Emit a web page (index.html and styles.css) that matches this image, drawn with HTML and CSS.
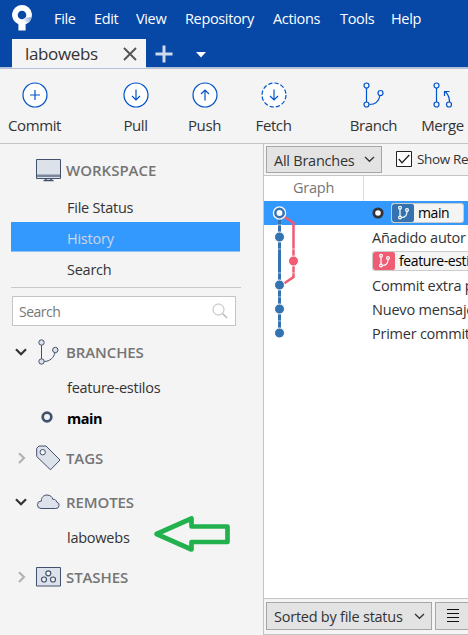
FILE: index.html
```html
<!DOCTYPE html>
<html lang="en">
<head>
<meta charset="utf-8">
<title>labowebs</title>
<link rel="stylesheet" href="styles.css">
</head>
<body>
<div class="app">
  <header class="titlebar">
    <nav class="menu">
      <svg class="logo" width="22" height="28" viewBox="0 0 22 28"><defs><linearGradient id="lg" x1="1" y1="0" x2="0" y2=".6"><stop offset="0" stop-color="#7f9fd0"/><stop offset="1" stop-color="#fff"/></linearGradient></defs><path fill="#fff" fill-rule="evenodd" d="M11 1a10 10 0 0 1 3.600 19.300V26.500H7.400V20.300A10 10 0 0 1 11 1zm0 5.700a4.300 4.300 0 1 0 0 8.600 4.300 4.300 0 0 0 0-8.600z"/><path fill="url(#lg)" d="M11.500 15.300l3.400-1.600 6-.7a10 10 0 0 1-6.300 7.300V17z"/></svg>
      <span class="m-file">File</span><span class="m-edit">Edit</span><span class="m-view">View</span><span class="m-repo">Repository</span><span class="m-act">Actions</span><span class="m-tools">Tools</span><span class="m-help">Help</span>
    </nav>
    <div class="tabs">
      <div class="tab"><span>labowebs</span><svg width="14" height="14" viewBox="0 0 14 14"><path d="M1 1l12 12M13 1L1 13" stroke="#555" stroke-width="1.900"/></svg></div>
      <svg class="plus" width="18" height="18" viewBox="0 0 18 18"><path d="M9 .5v17M.5 9h17" stroke="#d0dcee" stroke-width="3"/></svg>
      <svg class="caret" width="10" height="6" viewBox="0 0 10 6"><path d="M0 0h10L5 5.500z" fill="#fff"/></svg>
    </div>
  </header>
  <div class="toolbar">
    <div class="tool commit"><svg width="26" height="26" viewBox="0 0 26 26"><circle cx="13" cy="13" r="12" fill="#fff"/><path d="M13 8v10M8 13h10"/></svg><span>Commit</span></div>
    <div class="tool"><svg width="26" height="26" viewBox="0 0 26 26"><circle cx="13" cy="13" r="12" fill="#fff"/><path d="M13 7.500v10.500M9 14l4 4 4-4"/></svg><span>Pull</span></div>
    <div class="tool"><svg width="26" height="26" viewBox="0 0 26 26"><circle cx="13" cy="13" r="12" fill="#fff"/><path d="M13 18.500V8M9 12l4-4 4 4"/></svg><span>Push</span></div>
    <div class="tool"><svg width="26" height="26" viewBox="0 0 26 26"><circle cx="13" cy="13" r="12" fill="#fff" stroke-dasharray="4.300 1.983"/><path d="M13 7.500v10.500M9 14l4 4 4-4"/></svg><span>Fetch</span></div>
    <div class="tool branch"><svg width="26" height="26" viewBox="0 0 26 26"><path d="M5.500 6v14M8.500 22.500c6 0 9.500-4 10.500-9"/><circle cx="5.500" cy="3.500" r="2.500"/><circle cx="5.500" cy="22.500" r="2.500"/><circle cx="19.500" cy="11" r="2.500"/></svg><span>Branch</span></div>
    <div class="tool"><svg width="26" height="26" viewBox="0 0 26 26"><path d="M6.500 6v14M19.500 20c0-4-1.500-8-4.500-10.500M14.500 14V9.500h5"/><circle cx="6.500" cy="3.500" r="2.500"/><circle cx="6.500" cy="22.500" r="2.500"/><circle cx="19" cy="22.500" r="2.500"/></svg><span>Merge</span></div>
  </div>
  <div class="content">
    <aside class="sidebar">
      <div class="head workspace"><i class="arrow"></i><svg class="icon" width="26" height="24" viewBox="0 0 26 24"><path d="M.5 1.500h24v19H.5z" fill="#dde1ea" stroke="#42526e"/><path d="M1 16.500h23v2.500H1z" fill="#7a8699"/><path d="M10 20v2M15 20v2M7.500 22.500h10" stroke="#42526e" stroke-width="1.500"/></svg><span>WORKSPACE</span></div>
      <div class="item">File Status</div>
      <div class="item selected">History</div>
      <div class="item find">Search</div>
      <div class="search"><span>Search</span><svg width="16" height="16" viewBox="0 0 16 16" fill="none" stroke="#b8b8b8"><circle cx="6.500" cy="6.500" r="5.500"/><path d="M10.500 10.500l4.500 4.500" stroke-width="1.400"/></svg></div>
      <div class="head branches"><svg class="arrow" width="12" height="8" viewBox="0 0 12 8"><path d="M1 1.200l5 5 5-5" fill="none" stroke="#333" stroke-width="2.200"/></svg><svg class="icon" width="26" height="26" viewBox="0 0 26 26" fill="#dde1ea" stroke="#42526e"><path fill="none" d="M5.500 6v14M8 22.500c6 0 10-4 11-9"/><circle cx="5.500" cy="3.500" r="2.700"/><circle cx="5.500" cy="22.500" r="2.700"/><circle cx="19.300" cy="11" r="2.700"/></svg><span>BRANCHES</span></div>
      <div class="item feature">feature-estilos</div>
      <div class="item current"><svg width="12" height="12" viewBox="0 0 12 12"><circle cx="6" cy="6" r="4.300" fill="none" stroke="#42526e" stroke-width="2.700"/></svg><span>main</span></div>
      <div class="head tags"><svg class="arrow" width="12" height="12" viewBox="0 0 12 12"><path d="M4 1.200L9 6l-5 5" fill="none" stroke="#b3b3b3" stroke-width="2.200"/></svg><svg class="icon" width="26" height="26" viewBox="0 0 26 26" fill="#dde1ea" stroke="#42526e"><path d="M.7 3.200L3 1h7l14 14-9.500 9.800L.7 11.500z"/><circle cx="6.700" cy="7.200" r="2.700" fill="#f4f4f4"/></svg><span>TAGS</span></div>
      <div class="head remotes"><svg class="arrow" width="12" height="8" viewBox="0 0 12 8"><path d="M1 1.200l5 5 5-5" fill="none" stroke="#333" stroke-width="2.200"/></svg><svg class="icon" width="26" height="16" viewBox="0 0 26 16"><path d="M5 14.500a3.700 3.700 0 0 1 .3-7.400C5.200 3 8 1 11 1c3 0 5.200 1.800 5.800 4.300 2-.4 3.600.8 3.800 2.700a3.300 3.300 0 0 1-1 6.500z" fill="#dde1ea" stroke="#42526e"/></svg><span>REMOTES</span></div>
      <div class="item remote"><span>labowebs</span><svg class="pointer" width="78" height="38" viewBox="0 0 78 38"><path d="M4.500 19L39.500 3.500v8H75.500v15.500h-36v7.500z" fill="none" stroke="#22b14c" stroke-width="4.700" stroke-linejoin="round"/></svg></div>
      <div class="head stashes"><svg class="arrow" width="12" height="12" viewBox="0 0 12 12"><path d="M4 1.200L9 6l-5 5" fill="none" stroke="#b3b3b3" stroke-width="2.200"/></svg><svg class="icon" width="26" height="22" viewBox="0 0 26 22" fill="#dde1ea" stroke="#42526e"><path d="M.5 1.500h24v18.500H.5z"/><g fill="#f4f4f4" stroke-width="1.200"><circle cx="12.300" cy="7.300" r="2.500"/><circle cx="8" cy="13.500" r="2.500"/><circle cx="17" cy="13.500" r="2.500"/></g></svg><span>STASHES</span></div>
    </aside>
    <main class="log">
      <div class="filters">
        <div class="button all"><span>All Branches</span><svg width="11" height="7" viewBox="0 0 11 7"><path d="M1 1l4.500 4.300L10 1" fill="none" stroke="#333" stroke-width="1.300"/></svg></div>
        <svg class="check" width="16" height="16" viewBox="0 0 16 16"><path d="M.5.5h15v15H.5z" fill="#fff" stroke="#222"/><path d="M2.800 8l3.200 3.700L13.300 4" fill="none" stroke="#222" stroke-width="1.300"/></svg>
        <span class="show">Show Re</span>
      </div>
      <div class="columns"><div class="graph-title">Graph</div><div></div></div>
      <div class="history">
        <div class="row active"><svg class="dot" width="12" height="12" viewBox="0 0 12 12"><circle cx="6" cy="6" r="4.200" fill="#fff" stroke="#333" stroke-width="2.800"/></svg><div class="ref blue"><svg width="22" height="18" viewBox="0 0 22 18"><g fill="none" stroke="#fff" stroke-width="1.200"><path d="M8 5v7M9.500 13.500c3.500 0 5.500-2 5.500-6"/><circle cx="8" cy="3.700" r="1.400"/><circle cx="8" cy="13.500" r="1.400"/><circle cx="15" cy="6" r="1.400"/></g></svg><span>main</span></div></div>
        <div class="row">Añadido autor</div>
        <div class="row"><div class="ref red"><svg width="22" height="18" viewBox="0 0 22 18"><g fill="none" stroke="#fff" stroke-width="1.200"><path d="M8 5v7M9.500 13.500c3.500 0 5.500-2 5.500-6"/><circle cx="8" cy="3.700" r="1.400"/><circle cx="8" cy="13.500" r="1.400"/><circle cx="15" cy="6" r="1.400"/></g></svg><span>feature-estil</span></div></div>
        <div class="row">Commit extra p</div>
        <div class="row nuevo">Nuevo mensaje</div>
        <div class="row">Primer commit</div>
        <svg class="graph" width="50" height="144" viewBox="0 0 50 144"><g fill="none"><path d="M15.500 12v120" stroke="#3572b0" stroke-width="3"/><path d="M20 15.500l9.500 6.500V76L20 82.500" stroke="#f15c75" stroke-width="2.500"/></g><path d="M13 24h5M13 48h5M13 72h5M13 96h5M13 120h5M27.500 48h4M27.500 72h4" stroke="#fff" stroke-width=".6"/><circle cx="15.500" cy="12" r="5" fill="#3572b0" stroke="#fff" stroke-width="3.500"/><circle cx="15.500" cy="12" r="4.200" fill="#fff" stroke="#3572b0" stroke-width="2.500"/><g fill="#3572b0" stroke="#fff" stroke-width="1"><circle cx="15.500" cy="36" r="5"/><circle cx="15.500" cy="84" r="5"/><circle cx="15.500" cy="108" r="5"/><circle cx="15.500" cy="132" r="5"/><circle cx="29.500" cy="60" r="5" fill="#f15c75"/></g></svg>
      </div>
      <div class="statusbar"><div class="button sort"><span>Sorted by file status</span><svg width="11" height="7" viewBox="0 0 11 7"><path d="M1 1l4.500 4.300L10 1" fill="none" stroke="#333" stroke-width="1.300"/></svg></div><div class="button list"><svg width="12" height="14" viewBox="0 0 12 14"><path d="M0 1.500h12M0 5.500h12M0 9.500h12M0 13.500h12" stroke="#111" stroke-width="1.200"/></svg></div></div>
    </main>
  </div>
</div>
</body>
</html>
```
FILE: styles.css
```css
* { box-sizing: border-box; }
body { margin: 0; overflow: hidden; font-family: "Open Sans", "Noto Sans", sans-serif; font-size: 14.5px; letter-spacing: -.24px; color: #333; }
svg { display: block; flex: none; }
span { white-space: nowrap; }
.app { width: 468px; height: 635px; overflow: hidden; background: #f4f4f4; display: flex; flex-direction: column; }
.titlebar { height: 69px; flex: none; background: #0747a6; border-bottom: 2px solid #b4c1d9; }
.menu { height: 39px; display: flex; padding-left: 11px; color: #fff; line-height: 38px; letter-spacing: -.35px; }
.logo { margin-top: 4px; margin-right: 21px; }
.menu span { flex: none; }
.m-file { width: 40px; }
.m-edit { width: 42px; }
.m-view { width: 49px; }
.m-repo { width: 88px; }
.m-act { width: 67px; }
.m-tools { width: 51px; }
.tabs { display: flex; height: 30px; }
.tab { width: 134px; height: 29px; margin-left: 12px; background: #f4f4f4; padding: 0 9px 0 13px; display: flex; justify-content: space-between; align-items: center; font-size: 17px; letter-spacing: -.35px; }
.tab span { line-height: 28px; }
.plus { margin: 6px 0 0 9px; }
.caret { margin: 13px 0 0 23px; }
.toolbar { height: 75px; flex: none; border-bottom: 1px solid #c4c4c4; display: flex; }
.tool { flex: none; width: 69px; display: flex; flex-direction: column; align-items: center; padding-top: 13px; }
.tool svg { fill: none; stroke: #0052cc; stroke-width: 1.2; }
.tool span { line-height: 24px; margin-top: 5px; font-size: 15px; letter-spacing: -.4px; }
.commit { margin-right: 32px; }
.branch { margin-left: 31px; }
.content { flex: 1; display: flex; min-height: 0; }
.sidebar { width: 264px; flex: none; border-right: 1px solid #c4c4c4; }
.head { display: flex; align-items: center; color: #757575; font-weight: 600; font-size: 15px; letter-spacing: -.1px; height: 44px; padding-left: 15px; }
.workspace span { letter-spacing: 0; }
.arrow { width: 12px; margin-right: 9px; }
.icon { margin-right: 4px; }
.workspace { height: 48px; padding-top: 4px; }
.item { height: 30px; line-height: 31px; padding-left: 67px; margin-right: 23px; }
.selected { line-height: 33px; margin-left: 11px; padding-left: 56px; background: #3399ff; color: #cbd5e3; border-bottom: 1px solid #8dc2f7; }
.find { height: 36px; line-height: 36px; margin-left: 11px; margin-right: 22px; padding-left: 56px; border-bottom: 1px solid #c8c8c8; }
.search { width: 224px; height: 30px; margin: 8px 0 0 12px; background: #fff; border: 1px solid #c4c4c4; display: flex; justify-content: space-between; align-items: center; padding: 0 7px 0 6px; color: #777; font-size: 14px; letter-spacing: -.5px; }
.branches { height: 46px; margin-top: 3px; }
.feature { height: 29px; line-height: 26px; }
.current { display: flex; line-height: 29px; padding-left: 41px; color: #000; font-weight: 700; letter-spacing: -.5px; }
.current svg { margin: 7px 14px 0 0; }
.tags { margin-top: 2px; }
.remote { position: relative; height: 28px; line-height: 27px; }
.pointer { position: absolute; left: 152px; top: -9px; }
.stashes { margin-top: 3px; }
.log { width: 204px; display: flex; flex-direction: column; background: #fff; }
.filters { height: 32px; flex: none; background: #f4f4f4; border-bottom: 1px solid #c4c4c4; display: flex; padding: 2px 0 0 2px; overflow: hidden; }
.button { flex: none; background: #e3e3e3; border: 1px solid #a6a6a6; display: flex; align-items: center; justify-content: space-between; padding: 0 6px 0 7px; }
.all { width: 116px; height: 27px; }
.all span { padding-top: 2px; }
.check { margin: 5px 5px 0 14px; }
.show { line-height: 27px; font-size: 13.5px; letter-spacing: -.35px; }
.columns { height: 25px; flex: none; display: grid; grid-template-columns: 100px 1fr; color: #757575; }
.graph-title { border-right: 1px solid #ddd; text-align: center; line-height: 24px; }
.history { position: relative; flex: none; }
.row { height: 24px; padding-left: 108px; line-height: 24px; padding-top: 1px; white-space: nowrap; overflow: hidden; display: flex; align-items: center; }
.nuevo { letter-spacing: -.2px; }
.active { background: #3399ff; padding-top: 0; }
.dot { margin-right: 8px; }
.ref { height: 18px; display: flex; flex: none; background: #f4f4f4; border-radius: 2px; color: #000; box-shadow: 0 0 0 1px #ccc; overflow: hidden; }
.ref span { line-height: 17px; padding-left: 4px; }
.ref svg { border-radius: 2px; }
.blue { width: 71px; font-size: 14px; letter-spacing: -.4px; }
.blue svg { background: #3572b0; }
.red { width: 128px; margin-left: 1px; margin-top: -1px; font-size: 14px; letter-spacing: -.4px; }
.red svg { background: #f15c75; }
.graph { position: absolute; left: 0; top: 0; }
.statusbar { height: 37px; flex: none; margin-top: auto; background: #f4f4f4; border-top: 1px solid #c4c4c4; border-bottom: 1px solid #c4c4c4; display: flex; gap: 3px; padding: 3px 0 0 2px; overflow: hidden; }
.sort { width: 166px; height: 28px; }
.list { width: 40px; height: 28px; padding-left: 11px; }
.list svg { margin-top: -3px; }
```
